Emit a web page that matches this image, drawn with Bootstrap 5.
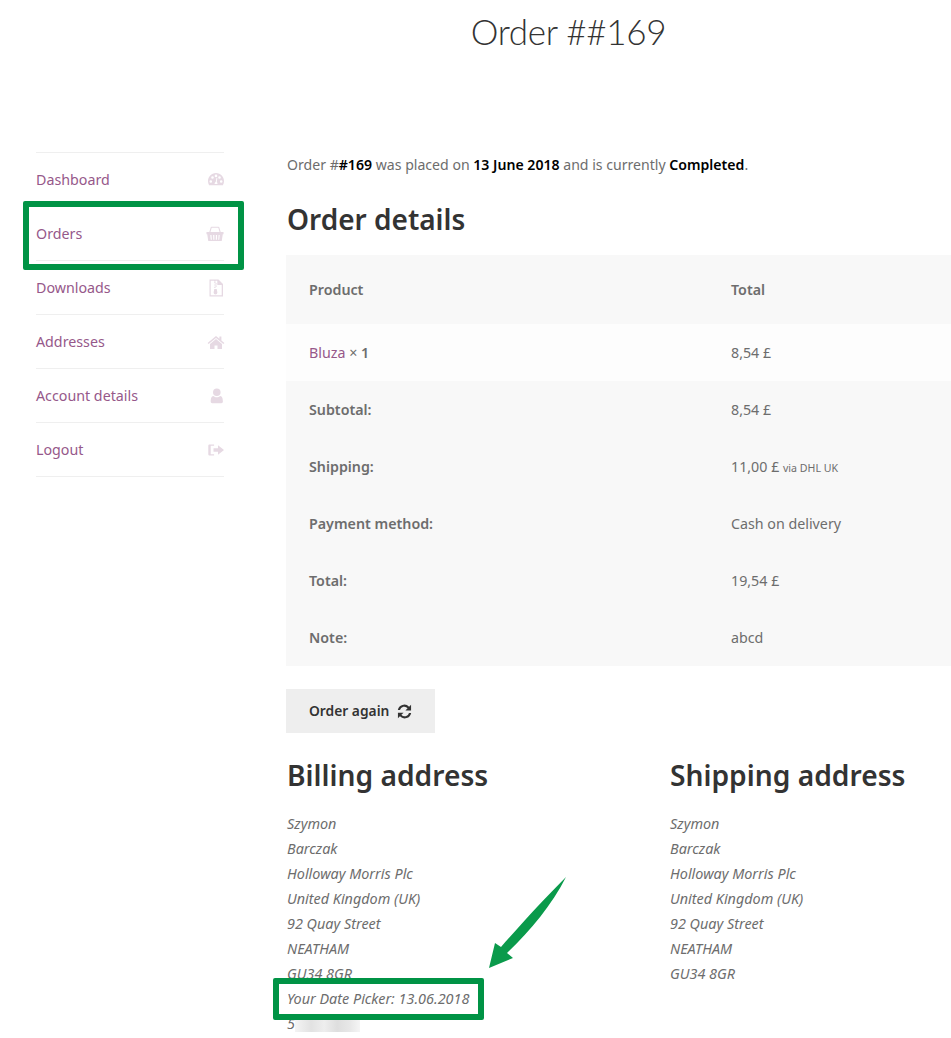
<!DOCTYPE html>
<html lang="en"><head><meta charset="utf-8">
<link href="https://cdn.jsdelivr.net/npm/bootstrap@5.3.0/dist/css/bootstrap.min.css" rel="stylesheet">
<script src="https://cdn.jsdelivr.net/npm/bootstrap@5.3.0/dist/js/bootstrap.bundle.min.js"></script>
<style>
html,body{margin:0;height:1038px;overflow:hidden;background:#fff}
body{font-family:"Noto Sans","Liberation Sans",sans-serif;font-size:14.25px;color:#6d6d6d}
.shell{width:1137px;height:1038px;overflow:hidden;position:relative}
.page-title{font-family:Lato,"Noto Sans",sans-serif;font-weight:300;font-size:35px;letter-spacing:-.3px;line-height:50px;color:#333;text-align:center;margin:6px 0 0;height:146px}
.cols{display:flex;padding-left:36px}
.side{width:188px;flex:none;margin-right:62px}
.side-list{list-style:none;margin:0;padding:0;border-top:1px solid #efefef}
.side-list li{height:54px;border-bottom:1px solid #efefef;display:flex;align-items:center;justify-content:space-between}
.side-list a{color:#96588a;text-decoration:none}
.side-list svg{width:18px;height:18px;fill:#e6d9e3;display:block;margin-right:-1px}
.main{flex:1;min-width:0}
.lead-line{margin:0 0 0 1px;height:49px;padding-top:2px;line-height:22px;white-space:nowrap;font-size:14.1px}
.lead-line b{color:#000;font-weight:600}
.sec-head{font-size:28px;font-weight:600;line-height:36px;color:#333;margin:0 0 18px 1px}
.order-tbl{width:815px;border-collapse:collapse;table-layout:fixed;margin:0}
.order-tbl th,.order-tbl td{padding:0 23px;height:57px;font-weight:400;color:#6d6d6d;background:#f8f8f8;border:0;vertical-align:middle}
.order-tbl th{font-weight:600}
.order-tbl .c1{width:422px}
.order-tbl thead th{height:69px;background:#f8f8f8}
.order-tbl tbody tr.item td{background:#fdfdfd}
.order-tbl a{color:#96588a;text-decoration:none}
.order-tbl small{font-size:10.6px}
.again{display:inline-flex;align-items:center;gap:8px;height:44px;padding:0 23px;background:#eee;color:#333;font-weight:600;font-size:13.8px;border:0;border-radius:0;margin:23px 0 20px}
.again svg{width:15px;height:15px;fill:#333}
.addr{display:flex;margin-left:1px}
.addr>div{width:383px;flex:none}
.addr h2{font-size:28.2px;font-weight:600;line-height:44px;color:#333;margin:0 0 14px}
.addr address{font-style:italic;font-size:14.4px;line-height:25px;margin:0;white-space:nowrap}
.blur-bit{display:inline-block;width:65px;height:16px;vertical-align:-3px;margin-left:-8px;background:linear-gradient(90deg,#f4f4f4,#e2e2e2 25%,#eee 45%,#dedede 65%,#e8e8e8 85%,#f5f5f5)}
.hl{position:absolute;border:6px solid #009345;border-radius:2px}
.hl-a{left:23px;top:201px;width:221px;height:69px}
.hl-b{left:273px;top:978px;width:211px;height:42px}
.arrow{position:absolute;left:486px;top:875px;width:84px;height:95px}
</style></head><body>
<div class="shell">
<h1 class="page-title">Order ##169</h1>
<div class="cols">
<nav class="side"><ul class="side-list">
<li><a href="#">Dashboard</a><svg viewBox="0 0 18 18"><path fill-rule="evenodd" d="M9 2C4.300 2 1 5.700 1 10.300c0 1.500.4 2.800 1.100 4h13.800c.7-1.200 1.100-2.500 1.100-4C17 5.700 13.700 2 9 2zM3.800 11.800a1.300 1.300 0 1 1 0-2.600 1.300 1.300 0 0 1 0 2.600zm1.700-4a1.300 1.300 0 1 1 0-2.600 1.300 1.300 0 0 1 0 2.600zM9 6.200a1.300 1.300 0 1 1 0-2.600 1.300 1.300 0 0 1 0 2.600zm1.500 6.800H7.600c0-1 .4-1.700 1.100-2l.8-4h.8l-.5 4c.5.400.7 1.100.7 2zm2-5.200a1.300 1.300 0 1 1 0-2.600 1.300 1.300 0 0 1 0 2.600zm1.700 4a1.300 1.300 0 1 1 0-2.600 1.300 1.300 0 0 1 0 2.600z"/></svg></li>
<li><a href="#">Orders</a><svg viewBox="0 0 19 19" class="me-0"><path fill-rule="evenodd" d="M3.500 7.500 5 2.500c.1-.4.400-.6.800-.6h7.400c.4 0 .7.200.8.600l1.500 5h-1.200L13 3H6L4.700 7.500zM.5 7.500h18v2.200h-.8l-1.100 7.100H2.400L1.300 9.700H.5zM4.500 10.500l.5 5h1.200l-.4-5zm3 0 .2 5h1.200l-.1-5zm2.900 0-.1 5h1.200l.2-5zm2.900 0-.4 5H14l.5-5z"/></svg></li>
<li><a href="#">Downloads</a><svg viewBox="0 0 18 18"><path fill-rule="evenodd" d="M2.500 0.500h9l4.500 4.500v12.500H2.500zm1.200 1.200v14.600h11V6h-4.400V1.700H8.500v1H7.300v-1zM7.300 3h1.200v1.200H7.300zm1.200 1.200h1.200v1.200H8.500zM7.300 5.400h1.200v1.200H7.300zm1.200 1.200h1.200v1.200H8.500zM7.300 7.800h1.200V9H7.300zM7.300 10h2.400l.7 3.500a1.900 1.900 0 1 1-3.800 0z"/></svg></li>
<li><a href="#">Addresses</a><svg viewBox="0 0 18 18"><path d="M9 3 .6 10l1 1.100L9 5l7.400 6.100 1-1.100-3-2.500V3.500h-2v2.300zM3 11v5h4.500v-3.500h3V16H15v-5L9 6z"/></svg></li>
<li><a href="#">Account details</a><svg viewBox="0 0 18 18"><path d="M9.800 1.500a3.800 3.800 0 1 1 0 7.600 3.800 3.800 0 0 1 0-7.600zM5.300 16.200c-1 0-1.600-.7-1.600-1.700 0-2.700.7-5.400 2.700-5.500 1 .9 2.100 1.300 3.400 1.300s2.400-.4 3.400-1.300c2 .1 2.700 2.800 2.700 5.500 0 1-.6 1.700-1.600 1.700z"/></svg></li>
<li><a href="#">Logout</a><svg viewBox="0 0 18 18"><path d="M2.600 3.500h4.500v1.300H3.700v8.400h3.400v1.300H2.600c-.8 0-1.300-.5-1.300-1.300V4.800c0-.8.500-1.300 1.300-1.300zM11 4.300l6 4.700-6 4.700v-3H6.500V7.300H11z"/></svg></li>
</ul></nav>
<main class="main">
<p class="lead-line">Order #<b>#169</b> was placed on <b>13 June 2018</b> and is currently <b>Completed</b>.</p>
<h2 class="sec-head">Order details</h2>
<table class="table order-tbl">
<thead><tr><th class="c1">Product</th><th>Total</th></tr></thead>
<tbody>
<tr class="item"><td><a href="#">Bluza</a> × <b class="fw-semibold">1</b></td><td>8,54 £</td></tr>
<tr><th>Subtotal:</th><td>8,54 £</td></tr>
<tr><th>Shipping:</th><td>11,00 £ <small>via DHL UK</small></td></tr>
<tr><th>Payment method:</th><td>Cash on delivery</td></tr>
<tr><th>Total:</th><td>19,54 £</td></tr>
<tr><th>Note:</th><td>abcd</td></tr>
</tbody></table>
<button class="btn again" type="button">Order again <svg viewBox="0 0 16 16"><path d="M15 .8v6H9l2.300-2.300A4.700 4.700 0 0 0 3.200 6.500H.9A7 7 0 0 1 12.900 2.900zM1 15.200v-6h6l-2.300 2.300a4.700 4.700 0 0 0 8.100-2h2.300A7 7 0 0 1 3.100 13.100z"/></svg></button>
<div class="addr">
<div><h2>Billing address</h2><address>Szymon<br>Barczak<br>Holloway Morris Plc<br>United Kingdom (UK)<br>92 Quay Street<br>NEATHAM<br>GU34 8GR<br>Your Date Picker: 13.06.2018<br>50<span class="blur-bit"></span></address></div>
<div><h2>Shipping address</h2><address>Szymon<br>Barczak<br>Holloway Morris Plc<br>United Kingdom (UK)<br>92 Quay Street<br>NEATHAM<br>GU34 8GR</address></div>
</div>
</main>
</div>
<div class="hl hl-a"></div>
<div class="hl hl-b"></div>
<svg class="arrow" viewBox="0 0 84 95"><path fill="#0a9a4b" d="M80 2C60 22 36 48 15 72L9 68 3 93 27 83 21 78C44 56 66 30 80 2z"/></svg>
</div>
</body></html>
